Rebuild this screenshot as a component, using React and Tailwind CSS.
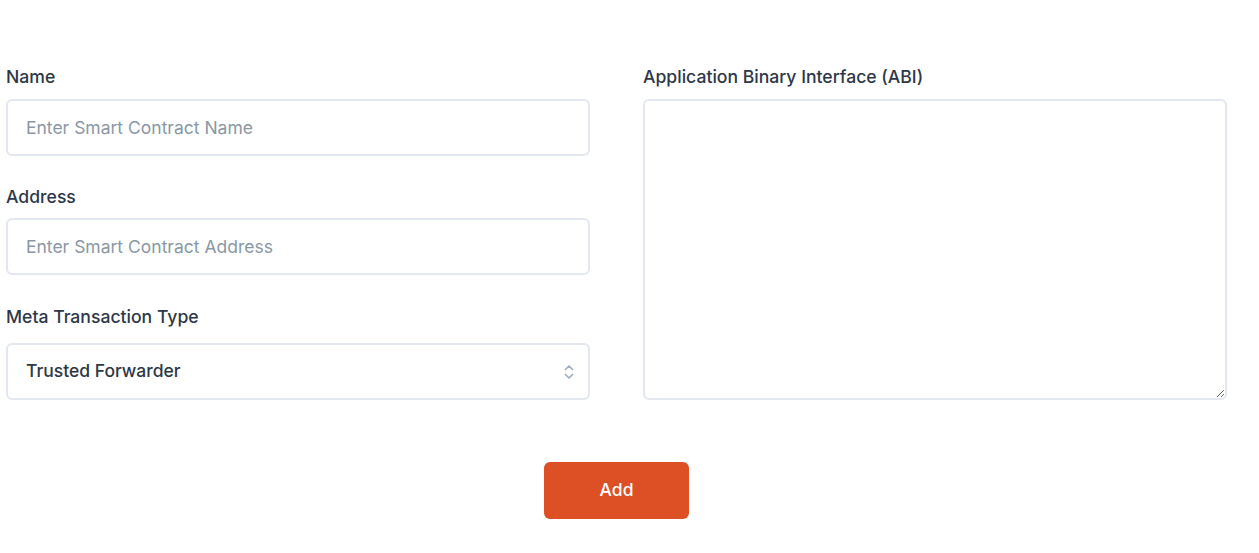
import React, { useState } from 'react';

const inputCls =
  'w-full h-[57px] rounded-md border-2 border-[#e3e8f0] bg-white px-[18px] text-[17.5px] text-[#2d3748] placeholder:text-[#8a97a5] outline-none';

const labelCls = 'h-6 text-[17.6px] font-medium leading-6 text-[#2d3748]';

const App = () => {
  const [form, setForm] = useState({
    name: '',
    address: '',
    type: 'Trusted Forwarder',
    abi: ''
  });

  const handleChange = (e) => {
    const { name, value } = e.target;
    setForm({ ...form, [name]: value });
  };

  return (
    <div className="min-h-[553px] bg-white pl-[6px] pr-[32px] pt-[65px] font-['Inter',sans-serif]">
      <div className="flex gap-[53px]">
        <div className="flex w-[584px] flex-col">
          <label className={`${labelCls} mb-[10px]`}>Name</label>
          <input
            name="name"
            value={form.name}
            onChange={handleChange}
            placeholder="Enter Smart Contract Name"
            className={inputCls}
          />
          <label className={`${labelCls} mb-[9px] mt-[29px]`}>Address</label>
          <input
            name="address"
            value={form.address}
            onChange={handleChange}
            placeholder="Enter Smart Contract Address"
            className={inputCls}
          />
          <label className={`${labelCls} mb-[14px] mt-[30px]`}>Meta Transaction Type</label>
          <div className="relative">
            <select
              name="type"
              value={form.type}
              onChange={handleChange}
              className={`${inputCls} appearance-none font-medium`}
            >
              <option>Trusted Forwarder</option>
              <option>Custom</option>
            </select>
            <svg
              className="pointer-events-none absolute right-[16px] top-1/2 -translate-y-1/2"
              width="10"
              height="18"
              viewBox="0 0 10 18"
              fill="none"
              stroke="#a0aec0"
              strokeWidth="1.7"
              strokeLinecap="round"
              strokeLinejoin="round"
            >
              <path d="M1.5 6.5L5 3l3.5 3.5" />
              <path d="M1.5 11.5L5 15l3.5-3.5" />
            </svg>
          </div>
        </div>
        <div className="flex w-[584px] flex-col">
          <label className={`${labelCls} mb-[10px]`}>Application Binary Interface (ABI)</label>
          <textarea
            name="abi"
            value={form.abi}
            onChange={handleChange}
            className="h-[301px] w-full rounded-md border-2 border-[#e3e8f0] bg-white px-[18px] py-3 text-[17.5px] text-[#2d3748] outline-none"
          ></textarea>
        </div>
      </div>
      <div className="mt-[62px] flex justify-center">
        <button
          type="button"
          className="h-[57px] w-[145px] rounded-md bg-[#dd4f24] text-[17.5px] font-medium text-white"
        >
          Add
        </button>
      </div>
    </div>
  );
};

export default App;
